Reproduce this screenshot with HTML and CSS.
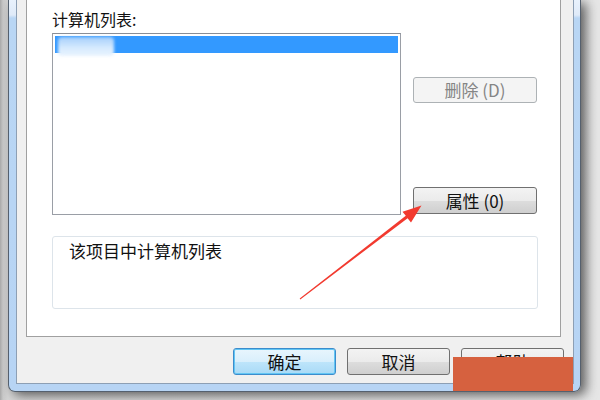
FILE: index.html
```html
<!DOCTYPE html>
<html lang="zh-CN">
<head>
    <meta charset="UTF-8">
    <title>计算机列表</title>
    <link rel="stylesheet" href="styles.css">
</head>
<body>
    <div class="window">
        <div class="client">
            <div class="panel">
                <div class="label">计算机列表:</div>
                <div class="main-row">
                    <div class="listbox">
                        <div class="item selected"><span class="blurred"></span></div>
                    </div>
                    <div class="side-buttons">
                        <button class="btn btn-delete" disabled>删除 (D)</button>
                        <button class="btn btn-props">属性 (0)</button>
                    </div>
                </div>
                <div class="desc">该项目中计算机列表</div>
            </div>
            <div class="actions">
                <button class="btn btn-default">确定</button>
                <button class="btn">取消</button>
                <button class="btn">帮助</button>
            </div>
        </div>
    </div>

    <!-- red annotation arrow -->
    <svg class="arrow" width="600" height="400" viewBox="0 0 600 400">
        <polygon points="299.7,298.6 405.8,215.8 402.5,211.8 421.5,205.5 411,222.4 407.6,218.2 300.3,299.4" fill="#f23a2f"/>
    </svg>
    <div class="mask"></div>
</body>
</html>
```

FILE: styles.css
```css
* {
    box-sizing: border-box;
}
body {
    margin: 0;
    width: 600px;
    height: 400px;
    overflow: hidden;
    position: relative;
    background: linear-gradient(to right, #a9a9a9 0, #c9c9c9 3px, #d6d6d6 8px, #e6e6e6 100%);
    font-family: "Noto Sans CJK SC", "Liberation Sans", sans-serif;
    color: #111;
}
.window {
    margin-left: 8px;
    width: 573px;
    height: 392px;
    border: 1px solid #55606e;
    border-top: none;
    border-radius: 0 0 7px 7px;
    padding: 0 6px 7px 7px;
    background: linear-gradient(#e9f2fc 0, #dfeaf8 15px, #b9d6f4 18px, #b7d4f4 100%);
    box-shadow: 5px 3px 12px rgba(0, 0, 0, 0.6);
}
.client {
    height: 384px;
    border: 1px solid #8d9fb4;
    border-top: none;
    background: #f0f0f0;
    padding: 0 9px;
    display: flex;
    flex-direction: column;
}
.panel {
    height: 337px;
    margin-right: 3px;
    background: #fff;
    border: 1px solid #a0a0a0;
    border-top: none;
    padding-left: 25px;
}
.label {
    font-size: 16px;
    line-height: 18px;
    margin-top: 10px;
}
.main-row {
    display: flex;
    margin-top: 5px;
    gap: 12px;
}
.listbox {
    width: 349px;
    height: 182px;
    border: 1px solid #9a9ea6;
    border-top-color: #8a8e96;
    padding: 2px;
}
.item {
    height: 17px;
}
.selected {
    background: #3399ff;
    overflow: visible;
}
.blurred {
    display: inline-block;
    width: 56px;
    height: 19px;
    margin: 1px 0 0 3px;
    background: linear-gradient(#a6cffb, #d8ebfe 60%, #e9f3fe);
    border-radius: 4px;
    filter: blur(1.5px);
}
.side-buttons {
    width: 124px;
    display: flex;
    flex-direction: column;
    padding-top: 44px;
}
.btn {
    font-family: "Noto Sans CJK SC", "Liberation Sans", sans-serif;
    font-size: 17px;
    line-height: 20px;
    color: #111;
    border: 1px solid #707070;
    border-radius: 3px;
    padding: 0;
    background: linear-gradient(#f3f3f3 0, #ebebeb 50%, #dddddd 51%, #cfcfcf 100%);
}
.btn-delete {
    height: 26px;
    border-color: #adb2b5;
    background: #f4f4f4;
    color: #858585;
}
.btn-props {
    height: 27px;
    margin-top: auto;
    margin-bottom: 1px;
}
.desc {
    width: 486px;
    height: 73px;
    margin-top: 21px;
    border: 1px solid #dde4ea;
    border-radius: 3px;
    padding: 4px 0 0 16px;
    font-size: 17px;
    line-height: 20px;
}
.actions {
    display: flex;
    justify-content: flex-end;
    gap: 11px;
    margin-top: 11px;
}
.actions .btn {
    width: 103px;
    height: 27px;
}
.btn-default {
    border-color: #3c8ccc;
    box-shadow: inset 0 0 0 1px #62c6f4;
    background: linear-gradient(#e8f5fd 0, #d9effc 50%, #bee5fb 51%, #a9daf6 100%);
}
.arrow {
    position: absolute;
    left: 0;
    top: 0;
    pointer-events: none;
}
.mask {
    position: absolute;
    left: 453px;
    top: 357px;
    width: 120px;
    height: 34px;
    background: #d6613f;
}
```
